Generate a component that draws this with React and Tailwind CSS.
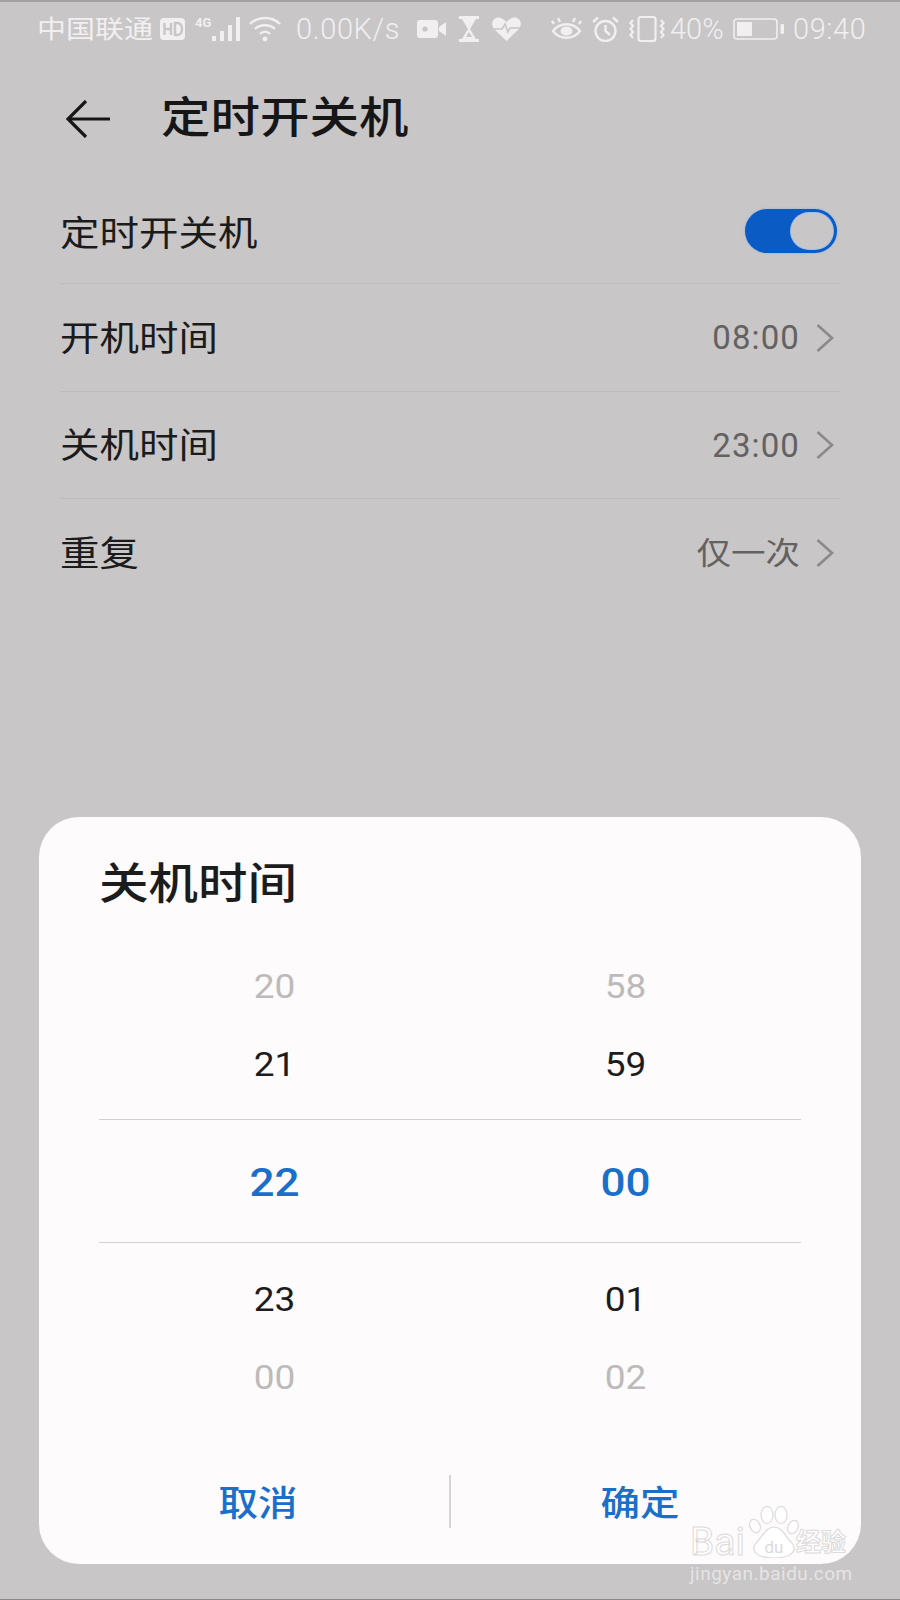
import clsx from "clsx";

// stretched video capture: the glyphs are wider than tall
const Tx = ({ className, children }) => (
  <span className={clsx("inline-block origin-center scale-y-[0.88] leading-none whitespace-nowrap", className)}>
    {children}
  </span>
);

const Chevron = () => (
  <svg viewBox="0 0 18 28" className="ml-[16px] h-[28px] w-[18px]" fill="none" stroke="#8b898b" strokeWidth="2.6">
    <path d="M1.5 1 L16 14 L1.5 27" />
  </svg>
);

const StatusBar = () => (
  <div className="flex h-[54px] items-center pl-[37px] text-[#f1eff0]">
    <Tx className="w-[116px] text-[29px]">中国联通</Tx>
    <svg viewBox="0 0 25 24" className="ml-[7px] h-[24px] w-[25px]">
      <rect x="0" y="1" width="25" height="22" rx="4" fill="#f1eff0" />
      <path d="M4.5 6v12M11 6v12M4.5 12H11M15 6v12h2.5c6 0 6-12 0-12z" stroke="#c8c6c6" strokeWidth="2.4" fill="none" />
    </svg>
    <div className="relative ml-[10px] h-[26px] w-[46px]">
      <span className="absolute left-0 top-0 text-[13px] leading-[13px] font-bold">4G</span>
      <svg viewBox="0 0 46 26" className="h-[26px] w-[46px]" fill="#f1eff0">
        <rect x="17" y="20" width="4" height="5" />
        <rect x="25" y="15" width="4" height="10" />
        <rect x="33" y="9" width="4" height="16" />
        <rect x="41" y="1" width="4" height="24" />
      </svg>
    </div>
    <svg viewBox="0 0 32 26" className="ml-[8px] h-[26px] w-[32px]" fill="none" stroke="#f1eff0" strokeWidth="2.4">
      <path d="M1 8 C9 0 23 0 31 8" />
      <path d="M6 13 C11 8 21 8 26 13" />
      <path d="M11 18 C14 15 18 15 21 18" />
      <circle cx="16" cy="23" r="2.4" fill="#f1eff0" stroke="none" />
    </svg>
    <span className="ml-[15px] w-[105px] text-[29px] leading-none font-light tracking-[0.6px] whitespace-nowrap">0.00K/s</span>
    <svg viewBox="0 0 29 20" className="ml-[16px] h-[20px] w-[29px]" fill="#f1eff0">
      <rect x="0" y="1" width="21" height="18" rx="3" />
      <path d="M22 8 L29 3 V17 L22 12z" />
      <circle cx="8" cy="10" r="2.6" fill="#c8c6c6" />
    </svg>
    <svg viewBox="0 0 20 26" className="ml-[13px] h-[26px] w-[20px]" fill="#f1eff0">
      <rect x="0" y="0" width="20" height="3" />
      <rect x="0" y="23" width="20" height="3" />
      <path d="M3 3 H17 L11 13 L17 23 H3 L9 13z" />
      <path d="M7 21 L10 16 L13 21z" fill="#c8c6c6" />
    </svg>
    <svg viewBox="0 0 29 24" className="ml-[13px] h-[24px] w-[29px]" fill="#f1eff0">
      <path d="M14.5 24 L2 12 C-3 5 3 -1 9 1 C11 2 13 3 14.5 5 C16 3 18 2 20 1 C26 -1 32 5 27 12z" />
      <path d="M0 12 H10 L13 7 L16 15 L18 11 H29" fill="none" stroke="#c8c6c6" strokeWidth="1.6" />
    </svg>
    <svg viewBox="0 0 31 26" className="ml-[30px] h-[26px] w-[31px]" fill="none" stroke="#f1eff0" strokeWidth="2.4">
      <path d="M2 15 C9 6 22 6 29 15 C22 24 9 24 2 15z" />
      <ellipse cx="15.5" cy="15" rx="6" ry="4.5" fill="#f1eff0" stroke="none" />
      <path d="M3 8 L1 5 M9 6 L7 2 M22 6 L24 2 M28 8 L30 5" />
    </svg>
    <svg viewBox="0 0 27 26" className="ml-[10px] h-[26px] w-[27px]" fill="none" stroke="#f1eff0" strokeWidth="2.4">
      <circle cx="13.5" cy="15" r="10" />
      <path d="M13.5 9 V15 L18 19" />
      <path d="M1 6 L6 1.5 M26 6 L21 1.5" />
    </svg>
    <svg viewBox="0 0 36 26" className="ml-[10px] h-[26px] w-[36px]" fill="none" stroke="#f1eff0" strokeWidth="2.2">
      <rect x="9.5" y="1" width="17" height="24" rx="2.5" />
      <path d="M4 4 L1.5 7 L4 10 L1.5 13 L4 16 L1.5 19 L4 22" />
      <path d="M32 4 L34.5 7 L32 10 L34.5 13 L32 16 L34.5 19 L32 22" />
    </svg>
    <span className="ml-[5px] w-[54px] text-[29px] leading-none font-light whitespace-nowrap">40%</span>
    <svg viewBox="0 0 51 22" className="ml-[9px] h-[22px] w-[51px]" fill="none">
      <rect x="1" y="1" width="43" height="20" rx="3" stroke="#f1eff0" strokeWidth="1.6" />
      <rect x="4" y="4" width="15" height="14" fill="#f1eff0" />
      <rect x="47.5" y="6" width="3.5" height="10" rx="1" fill="#f1eff0" />
    </svg>
    <span className="ml-[9px] text-[29px] leading-none font-light tracking-[0.6px] whitespace-nowrap">09:40</span>
  </div>
);

const Row = ({ label, value, h, last }) => (
  <div className={clsx("flex items-center justify-between pr-[6px] border-[#bdbbbb]", h, !last && "border-b")}>
    <Tx className="translate-y-[2px] text-[39.5px] text-[#1b1b1b]">{label}</Tx>
    <div className="flex items-center">
      {value.includes(":") ? (
        <span className="text-[33px] leading-none tracking-[1.1px] text-[#636161]">{value}</span>
      ) : (
        <Tx className="translate-y-[1px] text-[34.5px] text-[#636161]">{value}</Tx>
      )}
      <Chevron />
    </div>
  </div>
);

const WheelRow = ({ left, right, className, h = "h-[78px] pt-[4px]" }) => (
  <div className={clsx("grid grid-cols-2 items-center text-center", h, className)}>
    <div>
      <Tx>{left}</Tx>
    </div>
    <div>
      <Tx>{right}</Tx>
    </div>
  </div>
);

const Watermark = () => (
  <div className="absolute left-[690px] top-[1503px] w-[165px]">
    <div className="flex h-[53px] items-end">
      <span className="text-[39px] leading-[32px] text-white [-webkit-text-stroke:1px_#dcdadb]">Bai</span>
      <svg viewBox="0 0 50 52" className="ml-[4px] h-[52px] w-[50px] shrink-0" fill="#fff" stroke="#dcdadb" strokeWidth="1.2">
        <ellipse cx="6" cy="20" rx="5" ry="7" transform="rotate(-25 6 20)" />
        <ellipse cx="18" cy="9" rx="6" ry="8.5" />
        <ellipse cx="32" cy="9" rx="6" ry="8.5" />
        <ellipse cx="44" cy="21" rx="5" ry="7" transform="rotate(25 44 21)" />
        <path d="M25 21 C33 21 36 30 43 37 C50 46 40 52 25 52 C10 52 0 46 7 37 C14 30 17 21 25 21z" />
        <text x="25" y="47" fontSize="17" textAnchor="middle" fill="#dcdadb" stroke="none" fontFamily="Roboto">du</text>
      </svg>
      <span className="-ml-[3px] text-[25px] leading-[30px] font-bold whitespace-nowrap text-white [-webkit-text-stroke:1px_#dcdadb]">经验</span>
    </div>
    <div className="mt-[5px] text-[19px] leading-[22px] tracking-[0.5px] whitespace-nowrap text-[#e6e4e5]">jingyan.baidu.com</div>
  </div>
);

export default function App() {
  return (
    <div className="relative flex h-[1600px] w-[900px] flex-col overflow-hidden border-t-2 border-b border-t-[#a3a1a1] border-b-[#8a8888] bg-[#c8c6c6] font-['Roboto','Noto_Sans_CJK_SC',sans-serif]">
      <StatusBar />

      <div className="flex h-[126px] items-center pl-[66px]">
        <svg viewBox="0 0 44 38" className="h-[38px] w-[44px]" fill="none" stroke="#161616" strokeWidth="3.2">
          <path d="M44 19 H2 M20 1 L2 19 L20 37" />
        </svg>
        <Tx className="ml-[51px] text-[49.5px] font-medium text-[#161616]">定时开关机</Tx>
      </div>

      <div className="px-[60px]">
        <div className="flex h-[102px] items-center justify-between border-b border-[#bdbbbb] pr-[3px]">
          <Tx className="translate-y-[2px] text-[39.5px] text-[#1b1b1b]">定时开关机</Tx>
          <div className="mb-[4px] flex h-[44px] w-[92px] items-center justify-end rounded-full bg-[#0a5bc4] pr-[4px] shadow-[0_0_2px_#7fb0f0]">
            <div className="h-[36px] w-[42px] rounded-full bg-[#c8c6c6] ring-1 ring-[#9cc0f0]" />
          </div>
        </div>
        <Row label="开机时间" value="08:00" h="h-[108px]" />
        <Row label="关机时间" value="23:00" h="h-[107px]" />
        <Row label="重复" value="仅一次" h="h-[107px]" last />
      </div>

      <div className="mx-[39px] mt-[211px] h-[747px] rounded-[40px] bg-[#fdfbfc]">
        <div className="flex h-[130px] items-center pl-[60px]">
          <Tx className="translate-y-[3px] text-[49.5px] font-medium text-[#1c1c1c]">关机时间</Tx>
        </div>
        <div className="px-[60px] text-[37px]">
          <WheelRow left="20" right="58" className="text-[#bcbaba]" />
          <WheelRow left="21" right="59" className="text-[#1c1c1c]" />
          <WheelRow
            left="22"
            right="00"
            h="h-[124px]"
            className="mt-[16px] border-y border-[#d2d0d0] pt-[4px] text-[44px] font-medium text-[#1a6fca]"
          />
          <div className="h-[17px]" />
          <WheelRow left="23" right="01" className="text-[#1c1c1c]" />
          <WheelRow left="00" right="02" className="text-[#bcbaba]" />
        </div>
        <div className="mt-[59px] flex h-[53px] items-center">
          <div className="w-[410px] pt-[6px] pl-[28px] text-center">
            <Tx className="text-[39.5px] font-medium text-[#1a6fca]">取消</Tx>
          </div>
          <div className="h-full w-[2px] bg-[#d6d4d4]" />
          <div className="flex-1 pt-[6px] pr-[32px] text-center">
            <Tx className="text-[39.5px] font-medium text-[#1a6fca]">确定</Tx>
          </div>
        </div>
      </div>

      <Watermark />
    </div>
  );
}
